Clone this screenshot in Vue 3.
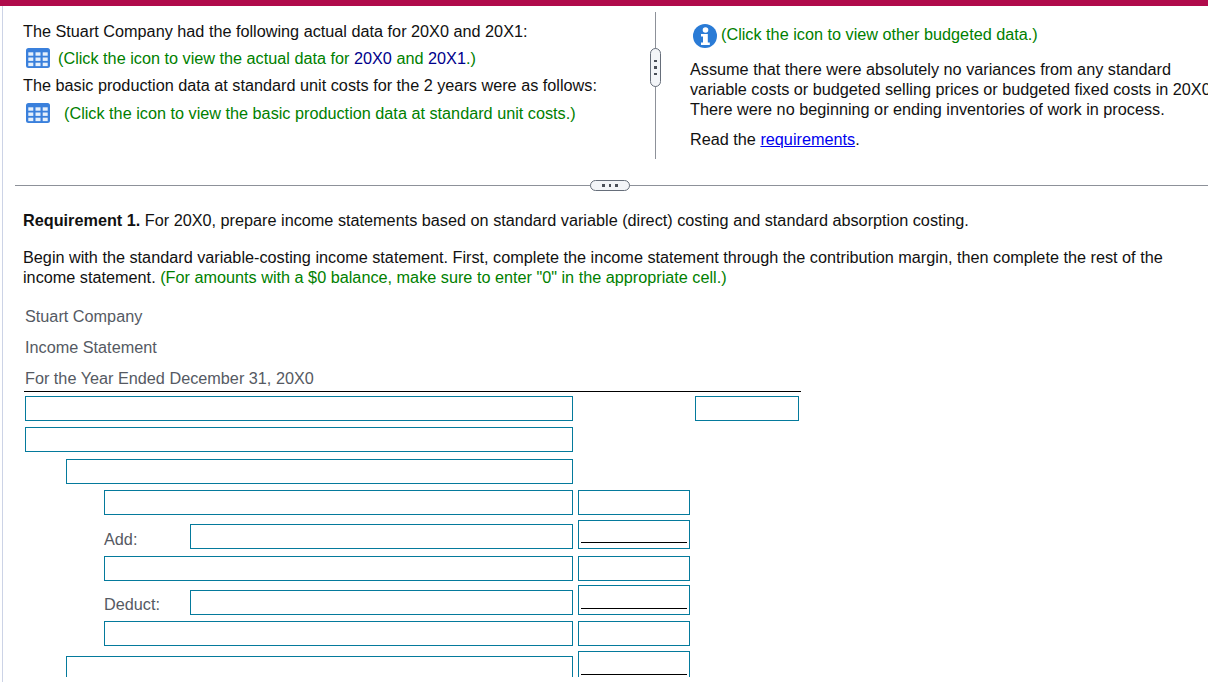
<script setup>
const cells = [
  [2.3, 4.3], [9.5, 4.3], [16.7, 4.3],
  [2.3, 9.5], [9.5, 9.5], [16.7, 9.5],
  [2.3, 14.7], [9.5, 14.7], [16.7, 14.7]
]
</script>

<template>
  <div class="screen">
    <div class="topbar"></div>
    <main class="page">
      <div class="clip">
        <section class="split">
          <div class="pane left">
            <p class="line">The Stuart Company had the following actual data for 20X0 and 20X1:</p>
            <p class="line green icon-line">
              <svg class="grid-icon" viewBox="0 0 24 20"><rect width="24" height="20" rx="2.5" fill="#3a80dc"/><rect v-for="(c, i) in cells" :key="i" :x="c[0]" :y="c[1]" width="5" height="3.4" fill="#e6f0fb"/></svg>
              <span>(Click the icon to view the actual data for <span class="navy">20X0</span> and <span class="navy">20X1</span>.)</span>
            </p>
            <p class="line">The basic production data at standard unit costs for the 2 years were as follows:</p>
            <p class="line green icon-line wide">
              <svg class="grid-icon" viewBox="0 0 24 20"><rect width="24" height="20" rx="2.5" fill="#3a80dc"/><rect v-for="(c, i) in cells" :key="i" :x="c[0]" :y="c[1]" width="5" height="3.4" fill="#e6f0fb"/></svg>
              <span>(Click the icon to view the basic production data at standard unit costs.)</span>
            </p>
          </div>
          <div class="vdivider"><span class="vpill"><i></i><i></i><i></i></span></div>
          <div class="pane right">
            <p class="info green">
              <svg class="info-icon" viewBox="0 0 24 24"><circle cx="12" cy="12" r="12" fill="#2a7bd6"/><circle cx="12.5" cy="6" r="2.8" fill="#fff"/><path d="M8 10h6.8v8.5h2V21H8v-2.5h2V12.5H8z" fill="#fff"/></svg>
              <span>(Click the icon to view other budgeted data.)</span>
            </p>
            <p class="para">Assume that there were absolutely no variances from any standard<br>variable costs or budgeted selling prices or budgeted fixed costs in 20X0.<br>There were no beginning or ending inventories of work in process.</p>
            <p class="read">Read the <a href="#" class="link">requirements</a>.</p>
          </div>
        </section>

        <div class="hrule"><span class="hpill"><i></i><i></i><i></i></span></div>

        <section class="req">
          <p class="req-title"><b>Requirement 1.</b> For 20X0, prepare income statements based on standard variable (direct) costing and standard absorption costing.</p>
          <p class="req-body">Begin with the standard variable-costing income statement. First, complete the income statement through the contribution margin, then complete the rest of the income statement. <span class="green">(For amounts with a $0 balance, make sure to enter "0" in the appropriate cell.)</span></p>
        </section>

        <section class="statement">
          <div class="heading">Stuart Company</div>
          <div class="heading">Income Statement</div>
          <div class="heading last">For the Year Ended December 31, 20X0</div>

          <div class="row r1"><input class="box" /><span class="mid"></span><input class="box third" /></div>
          <div class="row r2"><input class="box" /></div>
          <div class="row r3"><input class="box in1" /></div>
          <div class="row r4"><input class="box in2" /><input class="box mid" /></div>
          <div class="row r5">
            <label class="lab">Add:</label><input class="box grow" />
            <span class="total mid"></span>
          </div>
          <div class="row r6"><input class="box in2" /><input class="box mid" /></div>
          <div class="row r7">
            <label class="lab">Deduct:</label><input class="box grow" />
            <span class="total mid t2"></span>
          </div>
          <div class="row r8"><input class="box in2" /><input class="box mid" /></div>
          <div class="row r9"><input class="box in1" /><span class="total mid t3"></span></div>
        </section>
      </div>
    </main>
  </div>
</template>

<style>
html, body { margin: 0; background: #fff; overflow: hidden; }
</style>

<style scoped>
.screen { width: 1208px; height: 682px; overflow: hidden; font-family: "Liberation Sans", Arial, sans-serif; font-size: 16.24px; color: #111; background: #fff; }
.topbar { height: 6px; background: #b00b4b; }
.page { margin-left: 2px; border-left: 1px solid #ccd3e6; height: 676px; width: 1205px; background: #fff; }
.clip { height: 671px; overflow: hidden; }
p { margin: 0; }
.green { color: #008000; }
.navy { color: #00008b; }
.split { display: flex; height: 153px; padding-top: 6px; }
.pane.left { width: 632px; padding: 9px 0 0 20px; flex: none; }
.line { line-height: 20px; white-space: nowrap; }
.icon-line { display: flex; align-items: center; gap: 8px; padding-left: 3px; height: 20px; }
.line + .line { margin-top: 7px; }
.line + .icon-line { margin-top: 7px; }
.line + .wide { margin-top: 8px; }
.wide { gap: 14px; }
.grid-icon { width: 24px; height: 20px; flex: none; }
.vdivider { width: 1px; height: 147px; background: #8d9199; position: relative; flex: none; }
.vpill { position: absolute; left: -5px; top: 36px; width: 11px; height: 39px; border: 1px solid #666e7a; border-radius: 6px; background: #f3f5f8; display: flex; flex-direction: column; align-items: center; justify-content: center; gap: 4px; box-sizing: border-box; }
.vpill i, .hpill i { width: 2.5px; height: 2.5px; background: #4a4f58; display: block; }
.pane.right { padding: 10px 0 0 34px; flex: 1; white-space: nowrap; overflow: hidden; }
.info { display: flex; align-items: center; gap: 4px; margin-left: 3px; height: 24px; }
.info-icon { width: 24px; height: 24px; flex: none; margin-top: 4px; }
.para { line-height: 20px; margin-top: 13px; }
.read { line-height: 20px; margin-top: 10px; }
.link { color: #0000ee; text-decoration: underline; }
.hrule { height: 1px; background: #8d9199; margin: 20px 0 0 12px; position: relative; }
.hpill { position: absolute; left: 575px; top: -5px; width: 40px; height: 11px; border: 1px solid #666e7a; border-radius: 6px; background: #f3f5f8; box-sizing: border-box; display: flex; align-items: center; justify-content: center; gap: 4px; }
.req { padding: 0 20px; width: 1150px; }
.req-title { margin-top: 24px; line-height: 20px; }
.req-body { margin-top: 17px; line-height: 20px; }
.statement { padding-left: 22px; margin-top: 19px; }
.heading { height: 31px; line-height: 20px; color: #555a63; }
.heading.last { height: 23px; border-bottom: 1px solid #000; width: 776px; margin-left: -1px; padding-left: 1px; }
.row { display: flex; width: 776px; }
.box { box-sizing: border-box; width: 548px; height: 25px; border: 1px solid #047a9c; background: #fff; padding: 0; margin: 0; border-radius: 0; outline: none; flex: none; }
.mid { width: 112px; margin-left: 5px; flex: none; }
.third { width: 104px; margin-left: 5px; }
.box.mid { width: 112px; margin-left: 5px; }
.in1 { width: 507px; margin-left: 41px; }
.in2 { width: 469px; margin-left: 79px; }
.r1 { margin-top: 4px; }
.r2 { margin-top: 6px; }
.r3 { margin-top: 7px; }
.r4 { margin-top: 6px; }
.r5 { margin-top: 5px; height: 29px; }
.r6 { margin-top: 7px; }
.r7 { margin-top: 4px; height: 30px; }
.r8 { margin-top: 6px; }
.r9 { margin-top: 10px; }
.lab { width: 86px; margin-left: 79px; color: #555a63; line-height: 20px; align-self: flex-end; flex: none; }
.r7 .lab { margin-bottom: 1px; }
.grow { width: 383px; align-self: flex-end; }
.total { box-sizing: border-box; height: 29px; border: 1px solid #047a9c; position: relative; display: block; }
.total::after { content: ""; position: absolute; left: 2px; right: 2px; bottom: 5px; height: 1px; background: #000; }
.t2 { height: 30px; }
.t3 { height: 30px; margin-top: -5px; }
</style>
